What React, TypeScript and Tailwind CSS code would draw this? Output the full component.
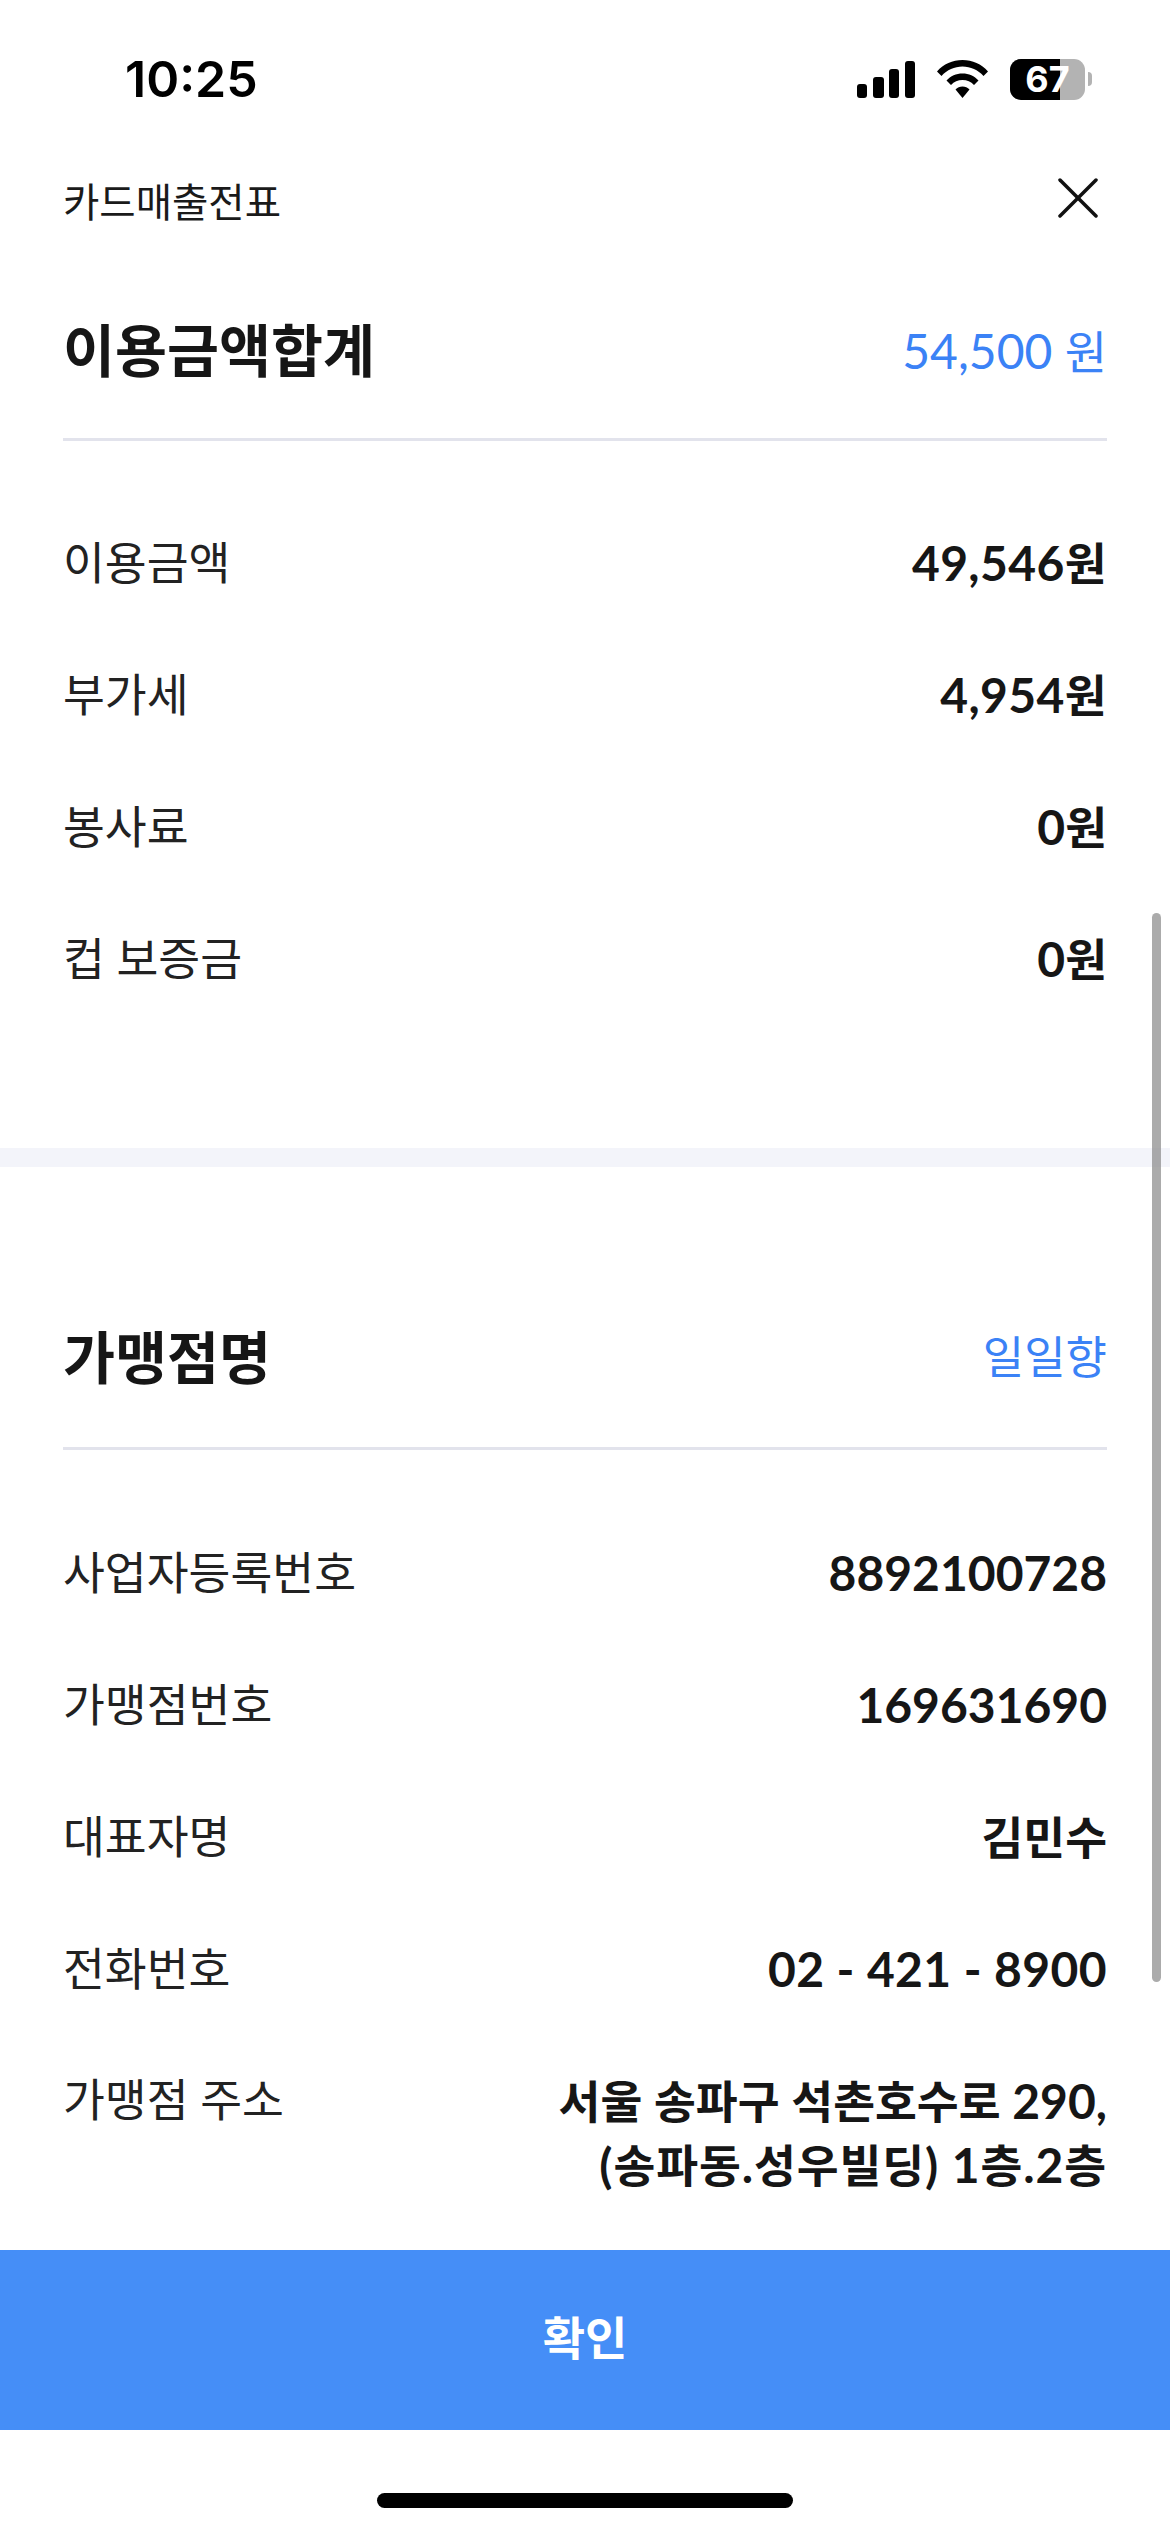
import React from "react";

const FONT = "[font-family:Lato,'Noto_Sans_CJK_KR',sans-serif]";

const summaryRows = [
  { label: "이용금액", value: "49,546원" },
  { label: "부가세", value: "4,954원" },
  { label: "봉사료", value: "0원" },
  { label: "컵 보증금", value: "0원" },
];

const storeRows = [
  { label: "사업자등록번호", value: "8892100728" },
  { label: "가맹점번호", value: "169631690" },
  { label: "대표자명", value: "김민수" },
  { label: "전화번호", value: "02 - 421 - 8900" },
];

// latin digits sit a bit larger than the hangul next to them
function Mixed({ text }: { text: string }) {
  const parts = text.match(/[\uac00-\ud7a3]+|[^\uac00-\ud7a3]+/g) || [];
  return (
    <>
      {parts.map((p, i) =>
        /[\uac00-\ud7a3]/.test(p) ? (
          <span key={i} className="text-[45.5px]">
            {p}
          </span>
        ) : (
          <span key={i}>{p}</span>
        )
      )}
    </>
  );
}

function StatusBar() {
  return (
    <div className="relative h-[150px] shrink-0">
      <div className="flex h-[158px] items-center justify-between pl-[125px] pr-[78px]">
        <span className="font-['Inter'] text-[50px] leading-none font-semibold text-black">10:25</span>
        <div className="flex items-center">
          <svg width="58" height="37" viewBox="0 0 58 37" className="mr-[22px]" fill="#000">
            <rect x="0" y="23" width="10" height="14" rx="3" />
            <rect x="16" y="16" width="11" height="21" rx="3" />
            <rect x="32" y="8" width="10" height="29" rx="3" />
            <rect x="48" y="0" width="10" height="37" rx="3" />
          </svg>
          <svg width="51" height="38" viewBox="0 0 51 38" className="mr-[22px]" fill="#000">
            <path d="M0 11.5C6.5 4 15.5 0 25.5 0S44.500 4 51 11.500L46.500 16C41 10 33.500 6.500 25.500 6.500S10 10 4.500 16Z" />
            <path d="M9.500 20.500C13.500 16 19.200 13.500 25.500 13.500S37.500 16 41.500 20.500L37 25C34 21.800 30 20 25.500 20S17 21.800 14 25Z" />
            <path d="M18.500 29.500C20.300 27.500 22.800 26.500 25.500 26.500S30.700 27.500 32.500 29.500L25.500 38Z" />
          </svg>
          <div className="relative h-[41px] w-[75px] overflow-hidden rounded-[11px] bg-[#b3b3b3]">
            <div className="h-full w-[50px] bg-black" />
            <span className="absolute inset-0 flex items-center justify-center font-['Inter'] text-[36px] leading-none font-bold text-white">67</span>
          </div>
          <div className="ml-[3px] h-[14px] w-[4px] rounded-r-full bg-[#b3b3b3]" />
        </div>
      </div>
    </div>
  );
}

function Row({ label, value }: { label: string; value: string }) {
  const spaced = /[,-]/.test(value);
  return (
    <div className="flex h-[132px] items-center justify-between">
      <span className="text-[45.5px] leading-none text-[#222222]">{label}</span>
      <span className={`text-[48px] leading-none font-bold text-[#161616] ${spaced ? "tracking-[0.4px]" : ""}`}>
        <Mixed text={value} />
      </span>
    </div>
  );
}

export default function App() {
  return (
    <div className={`relative flex h-[2532px] w-[1170px] flex-col overflow-hidden bg-white ${FONT}`}>
      <StatusBar />

      <div className="flex-1 overflow-hidden">
        <div className="px-[63px]">
          <div className="flex h-[104px] items-center justify-between">
            <h1 className="text-[39.5px] leading-none font-normal text-[#1a1a1a]">카드매출전표</h1>
            <button className="mr-[9px] mb-[8px]">
              <svg width="40" height="40" viewBox="0 0 40 40" fill="none" stroke="#111" strokeWidth="3.500" strokeLinecap="round" className="block">
                <path d="M2 2L38 38" />
                <path d="M38 2L2 38" />
              </svg>
            </button>
          </div>
          <div className="mt-[11px] flex h-[176px] items-center justify-between border-b-[3px] border-[#e2e3ec] pb-[2px]">
            <h2 className="text-[56.5px] leading-none font-bold text-[#161616]">이용금액합계</h2>
            <span className="text-[48px] leading-none text-[#3b82f6]">
              54,500 <span className="text-[46px]">원</span>
            </span>
          </div>
          <div className="pt-[56px] pb-[123px]">
            {summaryRows.map((r) => (
              <Row key={r.label} label={r.label} value={r.value} />
            ))}
          </div>
        </div>

        <div className="h-[19px] bg-[#f3f4fa]" />

        <div className="px-[63px] pt-[107px]">
          <div className="flex h-[176px] items-center justify-between border-b-[3px] border-[#e2e3ec] pb-[6px]">
            <h2 className="text-[56.5px] leading-none font-bold text-[#161616]">가맹점명</h2>
            <span className="text-[45px] leading-none text-[#3b82f6]">일일향</span>
          </div>
          <div className="pt-[57px]">
            {storeRows.map((r) => (
              <Row key={r.label} label={r.label} value={r.value} />
            ))}
            <div className="flex items-start justify-between pt-[34px]">
              <span className="pt-[8px] text-[45.5px] leading-[46px] text-[#222222]">가맹점 주소</span>
              <span className="text-right text-[48px] leading-[63px] font-bold text-[#161616]">
                <Mixed text="서울 송파구 석촌호수로 290," />
                <br />
                <span className="tracking-[0.9px]">
                  <Mixed text="(송파동.성우빌딩) 1층.2층" />
                </span>
              </span>
            </div>
          </div>
        </div>
      </div>

      <button className="h-[180px] w-full shrink-0 bg-[#458ef7] pb-[6px] text-[46px] font-bold text-white">확인</button>

      <div className="flex h-[102px] shrink-0 justify-center pt-[63px]">
        <div className="h-[15px] w-[416px] rounded-full bg-black" />
      </div>

      <div className="absolute top-[913px] left-[1152px] h-[1069px] w-[9px] rounded-full bg-[#8f8f8f]/75" />
    </div>
  );
}
